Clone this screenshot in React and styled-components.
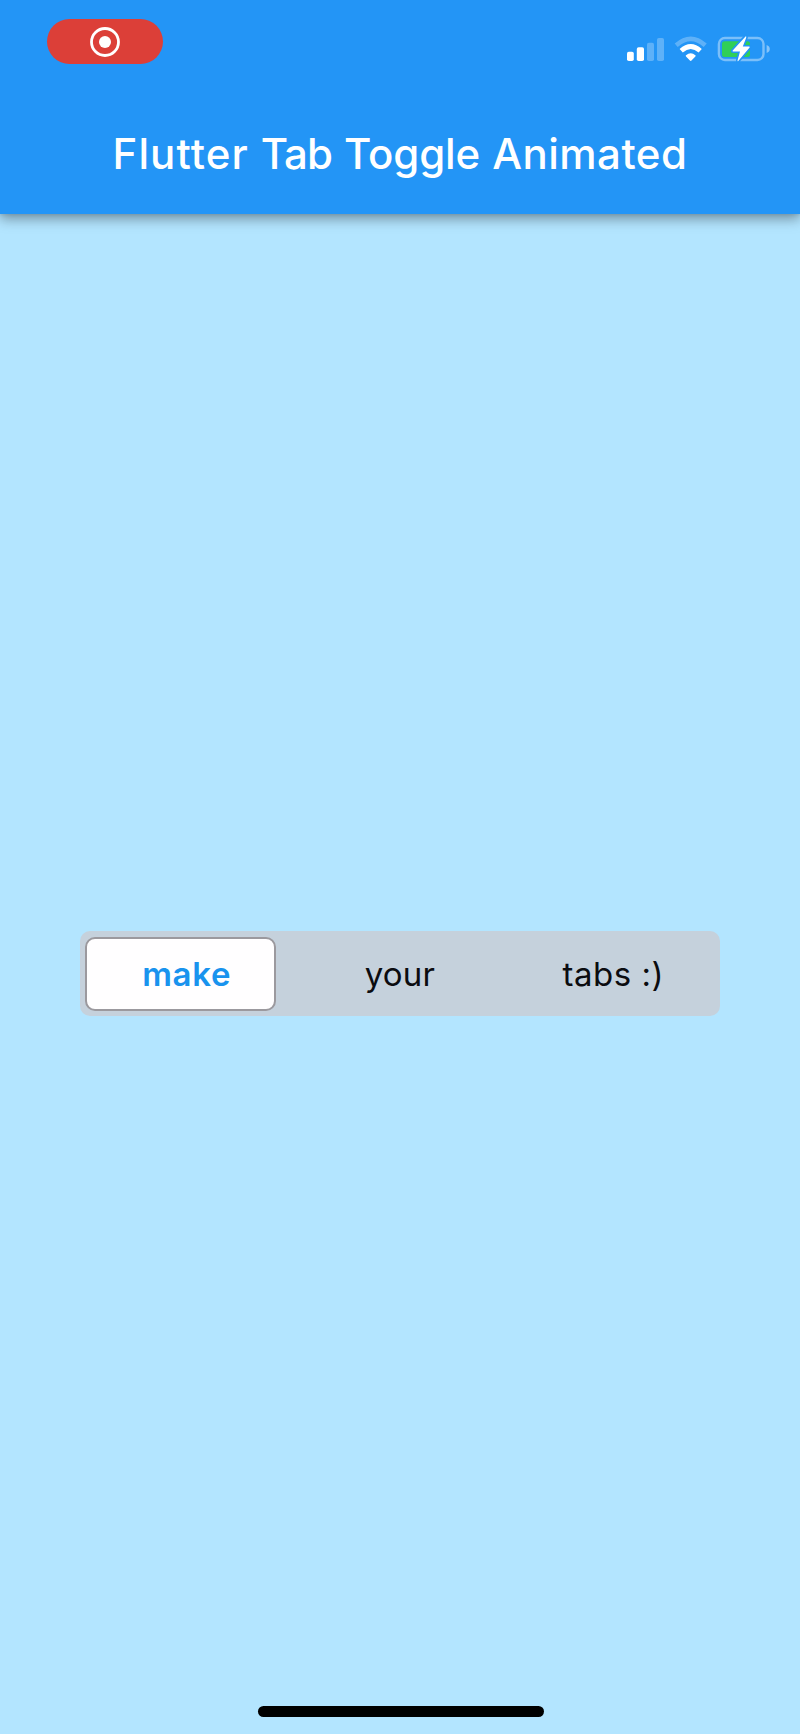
import React, { useState } from 'react';
import styled, { createGlobalStyle } from 'styled-components';

const GlobalStyle = createGlobalStyle`
  *, *::before, *::after { box-sizing: border-box; }
  body { margin: 0; background: #b3e5ff; }
`;

const Screen = styled.div`
  width: 800px;
  height: 1734px;
  display: flex;
  flex-direction: column;
  background: #b3e5ff;
  font-family: Inter, 'Liberation Sans', sans-serif;
  overflow: hidden;
`;

const AppBar = styled.header`
  height: 213.5px;
  flex: none;
  background: #2395f6;
  box-shadow: 0 5px 12px rgba(0, 0, 0, 0.36), 0 1px 3px rgba(0, 0, 0, 0.08);
`;

const StatusBar = styled.div`
  height: 98px;
  padding: 18.5px 29px 0 47px;
  display: flex;
  justify-content: space-between;
  align-items: flex-start;
`;

const RecordPill = styled.div`
  width: 115.5px;
  height: 45.5px;
  border-radius: 23px;
  background: #dc3f38;
  display: flex;
  align-items: center;
  justify-content: center;
  padding-top: 1.5px;
`;

const StatusIcons = styled.svg`
  width: 150px;
  height: 30px;
  margin-top: 15.5px;
`;

const Title = styled.h1`
  margin: 0;
  height: 112px;
  line-height: 112px;
  display: flex;
  justify-content: center;
  gap: 12px;
  color: #fff;
  font-size: 42px;
  font-weight: 500;
  white-space: nowrap;
`;

const Word = styled.span`
  letter-spacing: ${(p) => p.$spacing}px;
`;

const Body = styled.main`
  flex: 1;
  display: flex;
  align-items: center;
  justify-content: center;
  padding-top: 27px;
`;

const Toggle = styled.div`
  width: 640px;
  height: 85.5px;
  border-radius: 10px;
  background: #c5d1dc;
  display: grid;
  grid-template-columns: repeat(3, 1fr);
  position: relative;
`;

const Thumb = styled.div`
  position: absolute;
  left: 5px;
  top: 6px;
  width: 191px;
  height: 74px;
  border: 2px solid #9b999e;
  border-radius: 10px;
  background: #fffeff;
  transform: translateX(${(p) => p.$index * 219.5}px);
  transition: transform 250ms ease;
`;

const Tab = styled.button`
  position: relative;
  border: 0;
  padding: 2px 0 0;
  background: none;
  font-family: inherit;
  font-size: 33px;
  font-weight: ${(p) => (p.$active ? 600 : 400)};
  letter-spacing: ${(p) => p.$spacing}px;
  color: ${(p) => (p.$active ? '#1993ee' : '#0b0c10')};
`;

const HomeArea = styled.footer`
  height: 28px;
  flex: none;
  display: flex;
  justify-content: center;
  padding-left: 1px;
`;

const HomeBar = styled.div`
  width: 286px;
  height: 11px;
  border-radius: 6px;
  background: #000;
`;

const TITLE = [
  { text: 'Flutter', spacing: 1.1 },
  { text: 'Tab', spacing: -1 },
  { text: 'Toggle', spacing: -0.1 },
  { text: 'Animated', spacing: 0.5 },
];

const TABS = [
  { label: 'make', spacing: 0.7 },
  { label: 'your', spacing: 0.2 },
  { label: 'tabs :)', spacing: 0.5 },
];

function StatusGlyphs() {
  return (
    <StatusIcons viewBox="0 0 150 30">
      <g fill="#fff">
        <rect x="6" y="17.8" width="6.8" height="9.2" rx="1.8" />
        <rect x="15.8" y="13.3" width="7.2" height="13.7" rx="1.8" />
        <g fillOpacity="0.27">
          <rect x="26" y="8.8" width="7" height="18.2" rx="1.8" />
          <rect x="36" y="4" width="7" height="23" rx="1.8" />
        </g>
      </g>
      <g fill="none" stroke="#fff">
        <path d="M55.2 11.3Q69.7 -1.5 84.2 11.3" strokeWidth="4.6" strokeOpacity="0.27" />
        <path d="M60.2 16.8Q69.7 8.4 79.2 16.8" strokeWidth="4.8" />
      </g>
      <path d="M65 21.2Q69.7 17.2 74.4 21.2Q75 21.8 74.4 22.4L70.5 26.5Q69.7 27.3 68.9 26.5L65 22.4Q64.4 21.8 65 21.2Z" fill="#fff" />
      <rect x="97.9" y="4" width="44.6" height="22" rx="6" fill="none" stroke="#fff" strokeOpacity="0.4" strokeWidth="2.4" />
      <path d="M145.6 11Q148.8 12.2 148.8 15T145.6 19Z" fill="#fff" fillOpacity="0.45" />
      <rect x="101" y="7.3" width="28" height="15.7" rx="2.5" fill="#30cf58" />
      <path d="M124.3 2.7L111.7 16.5Q111 17.4 112.2 17.4H119L116.6 26.2Q116.2 28 117.5 26.7L128.6 13.5Q129.2 12.5 128 12.5H121.8L125.2 3.7Q125.5 1.5 124.3 2.7Z" fill="#fff" stroke="#2395f6" strokeWidth="3.2" paintOrder="stroke" />
    </StatusIcons>
  );
}

export default function App() {
  const [active, setActive] = useState(0);
  return (
    <Screen>
      <GlobalStyle />
      <AppBar>
        <StatusBar>
          <RecordPill>
            <svg width="32" height="32" viewBox="0 0 32 32">
              <circle cx="16" cy="16" r="13.5" fill="none" stroke="#fff" strokeWidth="2.8" />
              <circle cx="16" cy="16" r="6" fill="#fff" />
            </svg>
          </RecordPill>
          <StatusGlyphs />
        </StatusBar>
        <Title>
          {TITLE.map((word) => (
            <Word key={word.text} $spacing={word.spacing}>{word.text}</Word>
          ))}
        </Title>
      </AppBar>
      <Body>
        <Toggle>
          <Thumb $index={active} />
          {TABS.map((tab, i) => (
            <Tab key={tab.label} $active={i === active} $spacing={tab.spacing} onClick={() => setActive(i)}>
              {tab.label}
            </Tab>
          ))}
        </Toggle>
      </Body>
      <HomeArea>
        <HomeBar />
      </HomeArea>
    </Screen>
  );
}
